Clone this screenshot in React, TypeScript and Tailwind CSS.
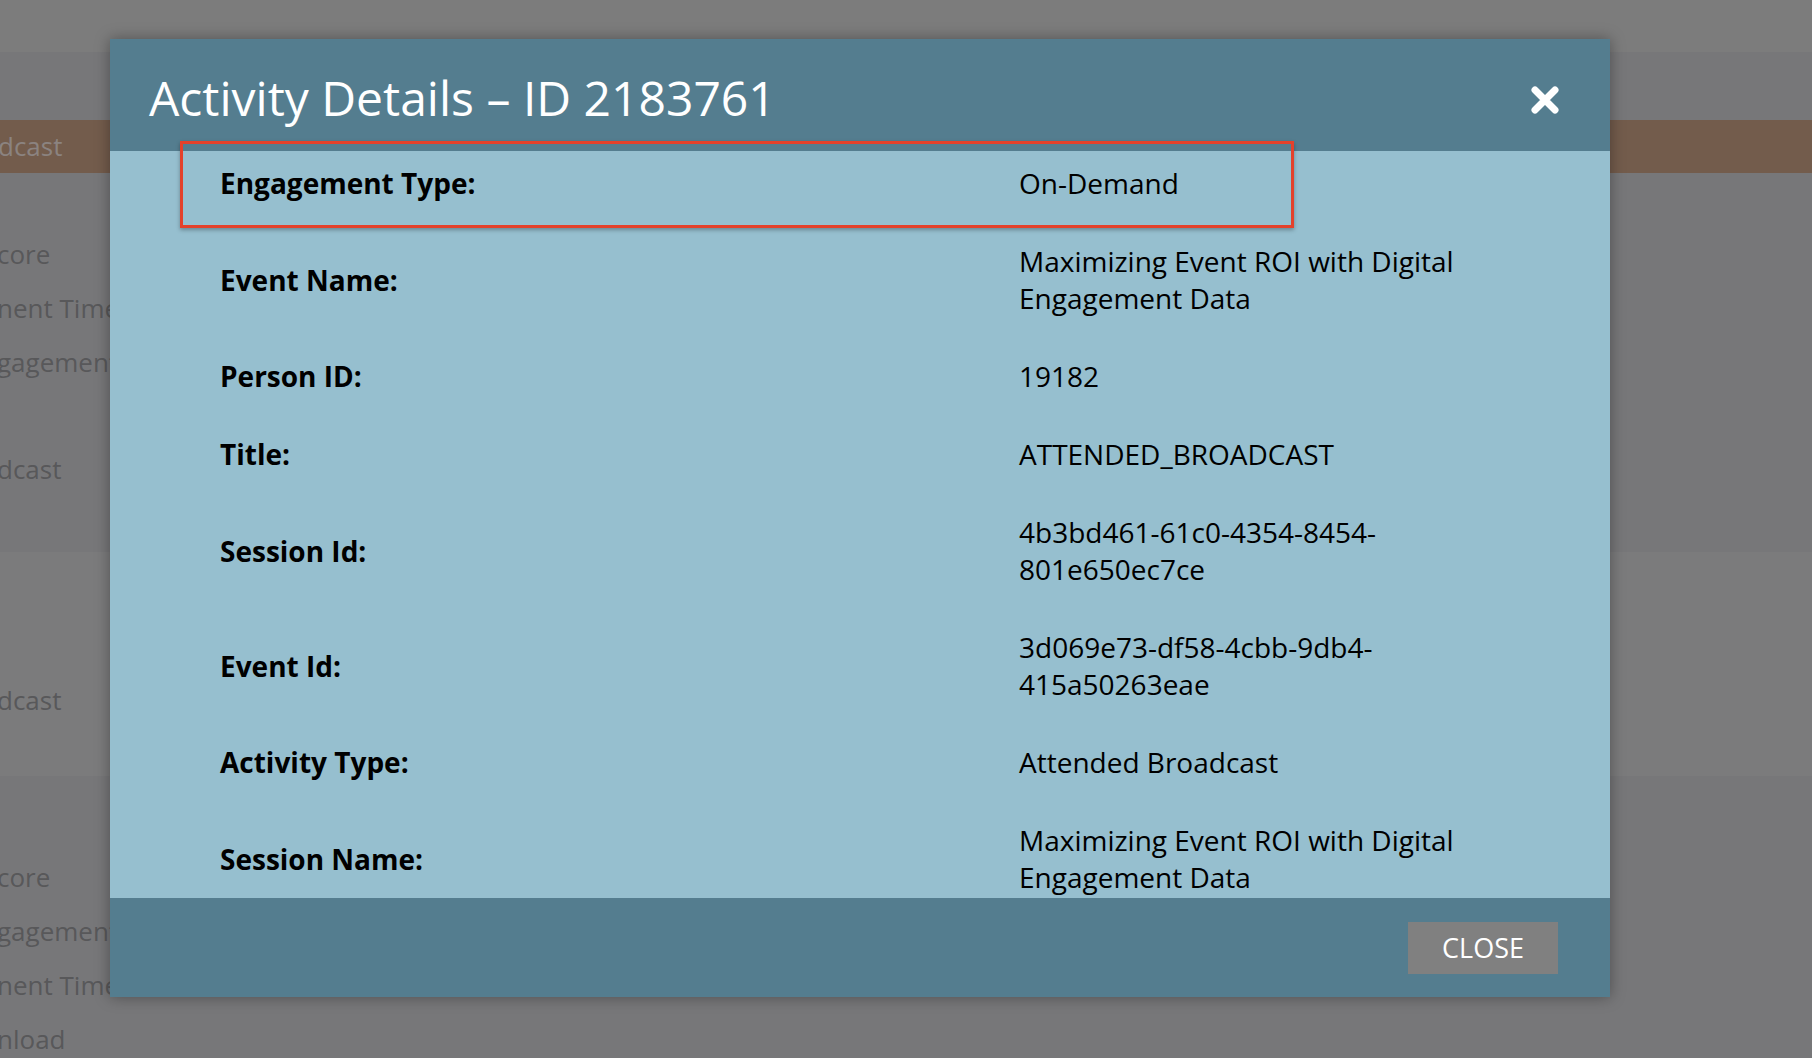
import React from "react";

const rows: { label: string; value: string[] }[] = [
  { label: "Engagement Type:", value: ["On-Demand"] },
  { label: "Event Name:", value: ["Maximizing Event ROI with Digital", "Engagement Data"] },
  { label: "Person ID:", value: ["19182"] },
  { label: "Title:", value: ["ATTENDED_BROADCAST"] },
  { label: "Session Id:", value: ["4b3bd461-61c0-4354-8454-", "801e650ec7ce"] },
  { label: "Event Id:", value: ["3d069e73-df58-4cbb-9db4-", "415a50263eae"] },
  { label: "Activity Type:", value: ["Attended Broadcast"] },
  { label: "Session Name:", value: ["Maximizing Event ROI with Digital", "Engagement Data"] },
];

function BgText({ children, className = "" }: { children: React.ReactNode; className?: string }) {
  return (
    <div className={"h-[54px] flex items-center text-[26px] text-[#58585a] whitespace-nowrap -ml-[3px] " + className}>
      {children}
    </div>
  );
}

export default function App() {
  return (
    <div
      className="relative w-[1812px] h-[1058px] overflow-hidden bg-[#777779]"
      style={{ fontFamily: '"Open Sans", "Noto Sans", sans-serif' }}
    >
      {/* background page (dimmed) */}
      <div className="flex flex-col w-full">
        <div className="h-[52px] bg-[#7c7c7c]" />
        <div className="h-[68px]" />
        <div className="h-[53px] bg-[#735c4c] flex items-center">
          <div className="text-[26px] text-[#8b8380] whitespace-nowrap -ml-[2px]">dcast</div>
        </div>
        <div className="h-[379px] flex flex-col pt-[54px]">
          <BgText>core</BgText>
          <BgText>nent Time</BgText>
          <BgText>gagement</BgText>
          <BgText className="mt-[53px] -ml-[2px]">dcast</BgText>
        </div>
        <div className="h-[224px] bg-[#7b7b7c] flex flex-col pt-[121px]">
          <BgText className="-ml-[2px]">dcast</BgText>
        </div>
        <div className="flex flex-col pt-[74px]">
          <BgText>core</BgText>
          <BgText>gagement</BgText>
          <BgText>nent Time</BgText>
          <BgText>nload</BgText>
        </div>
      </div>

      {/* modal */}
      <div className="absolute left-[110px] top-[39px] w-[1500px] h-[958px] flex flex-col shadow-[0_0_14px_rgba(0,0,0,0.35)]">
        <div className="h-[112px] bg-[#547d8f] flex items-center justify-between pl-[39px] pr-[50px] shrink-0">
          <div className="text-white text-[48px] leading-none pt-[6px]">Activity Details – ID 2183761</div>
          <svg width="30" height="28" viewBox="0 0 30 28" className="mt-[10px]">
            <path d="M5 4 L25 24 M25 4 L5 24" stroke="white" strokeWidth="7" strokeLinecap="round" />
          </svg>
        </div>
        <div className="flex-1 bg-[#96bfcf] overflow-hidden">
          <div className="-mt-[6px] pl-[110px]">
            {rows.map((r) => (
              <div key={r.label} className="grid grid-cols-[799px_480px] items-center pt-[20px] pb-[21px] text-[28px] leading-[37px] text-black">
                <div className="font-bold">{r.label}</div>
                <div>
                  {r.value.map((v) => (
                    <div key={v}>{v}</div>
                  ))}
                </div>
              </div>
            ))}
          </div>
        </div>
        <div className="h-[99px] bg-[#547d8f] flex items-center justify-end pr-[52px] shrink-0">
          <button className="w-[150px] h-[52px] bg-[#808080] text-white text-[27px] leading-none flex items-center justify-center">
            CLOSE
          </button>
        </div>
      </div>

      {/* highlight annotation */}
      <div className="absolute left-[180px] top-[141px] w-[1114px] h-[87px] border-[3px] border-[#e4412b] shadow-[0_2px_4px_rgba(0,0,0,0.3)]" />
    </div>
  );
}
